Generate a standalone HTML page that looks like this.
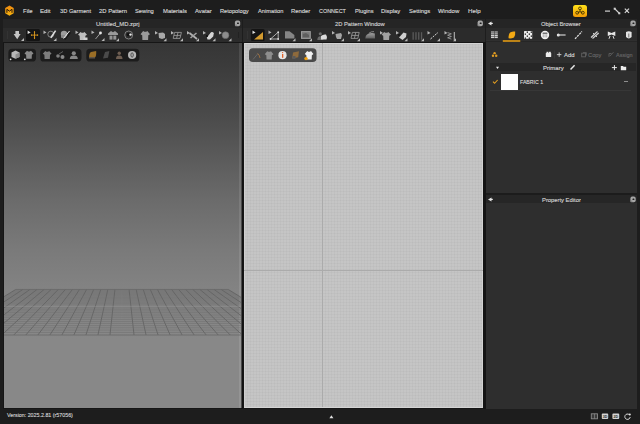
<!DOCTYPE html>
<html><head><meta charset="utf-8"><style>
html,body{margin:0;padding:0;width:640px;height:424px;overflow:hidden;background:#1c1c1c}
.b{position:absolute}
.t{position:absolute;white-space:nowrap;font-family:"Liberation Sans", sans-serif;transform-origin:0 0}
svg{position:absolute;overflow:visible}
</style></head><body>
<div class="b" style="left:0px;top:0px;width:640px;height:424px;background:#1d1d1d;"></div><div class="b" style="left:3px;top:19px;width:239px;height:9px;background:#252525;"></div><div class="b" style="left:3px;top:28px;width:239px;height:14px;background:#2b2b2b;"></div><div class="b" style="left:3px;top:42px;width:239px;height:367px;background:#161616;"></div><div class="b" style="left:241px;top:42px;width:3px;height:367px;background:#121212;"></div><div class="b" style="left:4px;top:43px;width:237px;height:365px;background:linear-gradient(#363636 0px, #3b3b3b 21px, #4a4a4a 71px, #6b6b6b 157px, #7a7a7a 207px, #838383 247px, #888888 297px, #888888 365px);"></div><div class="b" style="left:243px;top:19px;width:242px;height:9px;background:#252525;"></div><div class="b" style="left:243px;top:28px;width:242px;height:14px;background:#2b2b2b;"></div><div class="b" style="left:243px;top:42px;width:242px;height:367px;background:#161616;"></div><div class="b" style="left:483px;top:42px;width:3px;height:367px;background:#141414;"></div><div class="b" style="left:244px;top:43px;width:239px;height:365px;background:#c5c5c5;background-image:repeating-linear-gradient(90deg,rgba(0,0,0,0.022) 0 1px,transparent 1px 3px),repeating-linear-gradient(0deg,rgba(0,0,0,0.022) 0 1px,transparent 1px 3px)"></div><div class="b" style="left:244px;top:43px;width:239px;height:1px;background:#d4d4d4;"></div><div class="b" style="left:244px;top:43px;width:1px;height:365px;background:#cfcfcf;"></div><div class="b" style="left:322px;top:43px;width:1px;height:365px;background:#ababab;"></div><div class="b" style="left:482px;top:43px;width:1px;height:365px;background:#d2d2d2;"></div><div class="b" style="left:244px;top:407px;width:239px;height:1px;background:#d4d4d4;"></div><div class="b" style="left:239px;top:43px;width:2px;height:365px;background:rgba(255,255,255,0.10);"></div><div class="b" style="left:241px;top:43px;width:1px;height:365px;background:#4a4a4a;"></div><div class="b" style="left:244px;top:270px;width:239px;height:1px;background:#ababab;"></div><div class="b" style="left:486px;top:19px;width:151px;height:9px;background:#252525;"></div><div class="b" style="left:486px;top:28px;width:151px;height:14px;background:#2b2b2b;"></div><div class="b" style="left:486px;top:42px;width:151px;height:151px;background:#2e2e2e;"></div><div class="b" style="left:486px;top:40px;width:151px;height:1px;background:#2f2f2f;"></div><div class="b" style="left:486px;top:41px;width:151px;height:1px;background:#262626;"></div><div class="b" style="left:486px;top:193px;width:151px;height:2px;background:#1c1c1c;"></div><div class="b" style="left:486px;top:195px;width:151px;height:8px;background:#262626;"></div><div class="b" style="left:486px;top:203px;width:151px;height:206px;background:#2e2e2e;"></div><div class="b" style="left:490px;top:63px;width:146px;height:8px;background:#262626;"></div><div class="b" style="left:490px;top:90px;width:141px;height:1px;background:#373737;"></div><div class="b" style="left:501px;top:74px;width:17px;height:16px;background:#ffffff;"></div><svg width="640" height="424" style="left:0;top:0"><clipPath id="vp"><rect x="4" y="43" width="237" height="365"/></clipPath><g clip-path="url(#vp)"><line x1="15.70" y1="289.5" x2="-58.37" y2="335.0" stroke="#5e5e5e" stroke-width="0.75"/><line x1="22.79" y1="289.5" x2="-46.34" y2="335.0" stroke="#5e5e5e" stroke-width="0.75"/><line x1="29.87" y1="289.5" x2="-34.32" y2="335.0" stroke="#5e5e5e" stroke-width="0.75"/><line x1="36.96" y1="289.5" x2="-22.29" y2="335.0" stroke="#5e5e5e" stroke-width="0.75"/><line x1="44.05" y1="289.5" x2="-10.27" y2="335.0" stroke="#5e5e5e" stroke-width="0.75"/><line x1="51.13" y1="289.5" x2="1.75" y2="335.0" stroke="#5e5e5e" stroke-width="0.75"/><line x1="58.22" y1="289.5" x2="13.78" y2="335.0" stroke="#5e5e5e" stroke-width="0.75"/><line x1="65.31" y1="289.5" x2="25.80" y2="335.0" stroke="#5e5e5e" stroke-width="0.75"/><line x1="72.39" y1="289.5" x2="37.83" y2="335.0" stroke="#5e5e5e" stroke-width="0.75"/><line x1="79.48" y1="289.5" x2="49.85" y2="335.0" stroke="#5e5e5e" stroke-width="0.75"/><line x1="86.57" y1="289.5" x2="61.88" y2="335.0" stroke="#5e5e5e" stroke-width="0.75"/><line x1="93.65" y1="289.5" x2="73.90" y2="335.0" stroke="#5e5e5e" stroke-width="0.75"/><line x1="100.74" y1="289.5" x2="85.93" y2="335.0" stroke="#5e5e5e" stroke-width="0.75"/><line x1="107.83" y1="289.5" x2="97.95" y2="335.0" stroke="#5e5e5e" stroke-width="0.75"/><line x1="114.91" y1="289.5" x2="109.98" y2="335.0" stroke="#5e5e5e" stroke-width="0.75"/><line x1="122.00" y1="289.5" x2="122.00" y2="335.0" stroke="#8a8a8a" stroke-width="0.75"/><line x1="129.09" y1="289.5" x2="134.02" y2="335.0" stroke="#5e5e5e" stroke-width="0.75"/><line x1="136.17" y1="289.5" x2="146.05" y2="335.0" stroke="#5e5e5e" stroke-width="0.75"/><line x1="143.26" y1="289.5" x2="158.07" y2="335.0" stroke="#5e5e5e" stroke-width="0.75"/><line x1="150.35" y1="289.5" x2="170.10" y2="335.0" stroke="#5e5e5e" stroke-width="0.75"/><line x1="157.43" y1="289.5" x2="182.12" y2="335.0" stroke="#5e5e5e" stroke-width="0.75"/><line x1="164.52" y1="289.5" x2="194.15" y2="335.0" stroke="#5e5e5e" stroke-width="0.75"/><line x1="171.61" y1="289.5" x2="206.17" y2="335.0" stroke="#5e5e5e" stroke-width="0.75"/><line x1="178.69" y1="289.5" x2="218.20" y2="335.0" stroke="#5e5e5e" stroke-width="0.75"/><line x1="185.78" y1="289.5" x2="230.22" y2="335.0" stroke="#5e5e5e" stroke-width="0.75"/><line x1="192.87" y1="289.5" x2="242.25" y2="335.0" stroke="#5e5e5e" stroke-width="0.75"/><line x1="199.95" y1="289.5" x2="254.27" y2="335.0" stroke="#5e5e5e" stroke-width="0.75"/><line x1="207.04" y1="289.5" x2="266.29" y2="335.0" stroke="#5e5e5e" stroke-width="0.75"/><line x1="214.13" y1="289.5" x2="278.32" y2="335.0" stroke="#5e5e5e" stroke-width="0.75"/><line x1="221.21" y1="289.5" x2="290.34" y2="335.0" stroke="#5e5e5e" stroke-width="0.75"/><line x1="228.30" y1="289.5" x2="302.37" y2="335.0" stroke="#5e5e5e" stroke-width="0.75"/><line x1="-58.37" y1="335.00" x2="302.37" y2="335.00" stroke="#686868" stroke-width="0.8"/><line x1="-54.27" y1="332.48" x2="298.27" y2="332.48" stroke="#686868" stroke-width="0.4"/><line x1="-50.35" y1="330.08" x2="294.35" y2="330.08" stroke="#686868" stroke-width="0.4"/><line x1="-46.61" y1="327.77" x2="290.61" y2="327.77" stroke="#686868" stroke-width="0.4"/><line x1="-43.02" y1="325.57" x2="287.02" y2="325.57" stroke="#686868" stroke-width="0.4"/><line x1="-39.58" y1="323.46" x2="283.58" y2="323.46" stroke="#686868" stroke-width="0.4"/><line x1="-36.28" y1="321.43" x2="280.28" y2="321.43" stroke="#686868" stroke-width="0.4"/><line x1="-33.12" y1="319.49" x2="277.12" y2="319.49" stroke="#686868" stroke-width="0.4"/><line x1="-30.08" y1="317.62" x2="274.08" y2="317.62" stroke="#686868" stroke-width="0.4"/><line x1="-27.15" y1="315.82" x2="271.15" y2="315.82" stroke="#686868" stroke-width="0.4"/><line x1="-24.34" y1="314.09" x2="268.34" y2="314.09" stroke="#686868" stroke-width="0.4"/><line x1="-21.63" y1="312.43" x2="265.63" y2="312.43" stroke="#686868" stroke-width="0.4"/><line x1="-19.02" y1="310.83" x2="263.02" y2="310.83" stroke="#686868" stroke-width="0.4"/><line x1="-16.50" y1="309.28" x2="260.50" y2="309.28" stroke="#686868" stroke-width="0.4"/><line x1="-14.07" y1="307.79" x2="258.07" y2="307.79" stroke="#686868" stroke-width="0.4"/><line x1="-11.72" y1="306.34" x2="255.72" y2="306.34" stroke="#8c8c8c" stroke-width="0.6"/><line x1="-9.45" y1="304.95" x2="253.45" y2="304.95" stroke="#686868" stroke-width="0.4"/><line x1="-7.26" y1="303.61" x2="251.26" y2="303.61" stroke="#686868" stroke-width="0.4"/><line x1="-5.14" y1="302.30" x2="249.14" y2="302.30" stroke="#686868" stroke-width="0.4"/><line x1="-3.09" y1="301.05" x2="247.09" y2="301.05" stroke="#686868" stroke-width="0.4"/><line x1="-1.11" y1="299.83" x2="245.11" y2="299.83" stroke="#686868" stroke-width="0.4"/><line x1="0.82" y1="298.64" x2="243.18" y2="298.64" stroke="#686868" stroke-width="0.4"/><line x1="2.68" y1="297.50" x2="241.32" y2="297.50" stroke="#686868" stroke-width="0.4"/><line x1="4.49" y1="296.39" x2="239.51" y2="296.39" stroke="#686868" stroke-width="0.4"/><line x1="6.24" y1="295.31" x2="237.76" y2="295.31" stroke="#686868" stroke-width="0.4"/><line x1="7.94" y1="294.26" x2="236.06" y2="294.26" stroke="#686868" stroke-width="0.4"/><line x1="9.60" y1="293.25" x2="234.40" y2="293.25" stroke="#686868" stroke-width="0.4"/><line x1="11.20" y1="292.26" x2="232.80" y2="292.26" stroke="#686868" stroke-width="0.4"/><line x1="12.76" y1="291.30" x2="231.24" y2="291.30" stroke="#686868" stroke-width="0.4"/><line x1="14.28" y1="290.37" x2="229.72" y2="290.37" stroke="#686868" stroke-width="0.4"/><line x1="15.76" y1="289.47" x2="228.24" y2="289.47" stroke="#686868" stroke-width="0.8"/></g><defs><linearGradient id="lg" x1="0" y1="0" x2="0" y2="1"><stop offset="0" stop-color="#f08a10"/><stop offset="1" stop-color="#f7b40e"/></linearGradient><linearGradient id="yb" x1="0" y1="0" x2="0" y2="1"><stop offset="0" stop-color="#ffe11a"/><stop offset="1" stop-color="#f29a05"/></linearGradient></defs>
<polygon points="9.45,5.5 13.69352447854375,8.05 13.69352447854375,13.149999999999999 9.45,15.7 5.206475521456249,13.149999999999999 5.20647552145625,8.049999999999999" fill="url(#lg)" />
<path d="M6.9,12.8 L6.9,9.3 L9.45,11.1 L12.0,9.3 L12.0,12.8" fill="none" stroke="#2a1a08" stroke-width="1.0" />
<rect x="573" y="5" width="14" height="12" rx="2.5" fill="url(#yb)" />
<line x1="580" y1="9.6" x2="580" y2="11.6" stroke="#3b2a00" stroke-width="0.85" /><line x1="580" y1="11.6" x2="577.6" y2="12.8" stroke="#3b2a00" stroke-width="0.85" /><line x1="580" y1="11.6" x2="582.4" y2="12.8" stroke="#3b2a00" stroke-width="0.85" />
<circle cx="580" cy="8.4" r="1.4" fill="none" stroke="#3b2a00" stroke-width="0.85"/><circle cx="577.2" cy="12.7" r="1.45" fill="none" stroke="#3b2a00" stroke-width="0.85"/><circle cx="582.8" cy="12.7" r="1.45" fill="none" stroke="#3b2a00" stroke-width="0.85"/>
<rect x="605" y="10.5" width="5" height="1.2" rx="0" fill="#d0d0d0" />
<line x1="614.5" y1="8.5" x2="619.5" y2="13.5" stroke="#d0d0d0" stroke-width="1.1" />
<rect x="613.7" y="7.7" width="2" height="2" rx="0" fill="#d0d0d0" /><rect x="618.3" y="12.3" width="2" height="2" rx="0" fill="#d0d0d0" />
<line x1="624.8" y1="8.6" x2="629" y2="12.8" stroke="#d8d8d8" stroke-width="1.2" /><line x1="629" y1="8.6" x2="624.8" y2="12.8" stroke="#d8d8d8" stroke-width="1.2" />
<rect x="234.9" y="20.599999999999998" width="5.3" height="5.6" rx="1.8" fill="#a6a6a6" /><rect x="237.0" y="22.4" width="1.9" height="1.7" rx="0.6" fill="#202020" /><rect x="234.9" y="24.599999999999998" width="2" height="1.6" rx="0.6" fill="#8a8a8a" />
<rect x="477.59999999999997" y="20.599999999999998" width="5.3" height="5.6" rx="1.8" fill="#a6a6a6" /><rect x="479.7" y="22.4" width="1.9" height="1.7" rx="0.6" fill="#202020" /><rect x="477.59999999999997" y="24.599999999999998" width="2" height="1.6" rx="0.6" fill="#8a8a8a" />
<rect x="630.4" y="20.599999999999998" width="5.3" height="5.6" rx="1.8" fill="#a6a6a6" /><rect x="632.5" y="22.4" width="1.9" height="1.7" rx="0.6" fill="#202020" /><rect x="630.4" y="24.599999999999998" width="2" height="1.6" rx="0.6" fill="#8a8a8a" />
<rect x="630.4" y="196.6" width="5.3" height="5.6" rx="1.8" fill="#a6a6a6" /><rect x="632.5" y="198.4" width="1.9" height="1.7" rx="0.6" fill="#202020" /><rect x="630.4" y="200.6" width="2" height="1.6" rx="0.6" fill="#8a8a8a" />
<polygon points="488,23.4 491.5,21.4 491.5,25.4" fill="#e6e6e6" />
<rect x="491" y="22.799999999999997" width="1.8" height="1.2" rx="0" fill="#e6e6e6" />
<polygon points="488,199.4 491.5,197.4 491.5,201.4" fill="#e6e6e6" />
<rect x="491" y="198.8" width="1.8" height="1.2" rx="0" fill="#e6e6e6" />
<rect x="7" y="31" width="1" height="8" rx="0" fill="#333333" />
<polygon points="15.4,31 19,31 19,34 20.6,34 17.2,39.3 13.6,34 15.4,34" fill="#c4c4c4" />
<polygon points="24,38 24,41 21,41" fill="#b8b8b8" />
<rect x="26" y="29" width="14" height="12" rx="1.5" fill="#141414" />
<polygon points="27.6,30.6 30.6,32.5 27.6,34.0" fill="#e0e0e0" />
<line x1="31.2" y1="35.1" x2="37.9" y2="35.1" stroke="#e9a21f" stroke-width="0.85" /><line x1="34.5" y1="31.6" x2="34.5" y2="38.5" stroke="#e9a21f" stroke-width="0.85" />
<polygon points="34.5,30.9 33.6,32.3 35.4,32.3" fill="#e9a21f" /><polygon points="34.5,39.2 33.6,37.8 35.4,37.8" fill="#e9a21f" /><polygon points="30.6,35.1 32,34.2 32,36" fill="#e9a21f" /><polygon points="38.5,35.1 37.1,34.2 37.1,36" fill="#e9a21f" />
<polygon points="43.5,30.5 46.5,32.4 43.5,33.9" fill="#b4b4b4" />
<circle cx="50.8" cy="34.2" r="3" fill="none" stroke="#9a9a9a" stroke-width="0.8"/>
<line x1="55.6" y1="30.6" x2="50.8" y2="37.8" stroke="#dedede" stroke-width="1.6" />
<polygon points="56.5,38 56.5,41 53.5,41" fill="#b8b8b8" />
<circle cx="64" cy="34" r="3.2" fill="#9c9c9c" /><rect x="61" y="35" width="5" height="3" rx="1" fill="#8a8a8a" />
<line x1="69.5" y1="31" x2="63.5" y2="38.5" stroke="#e8e8e8" stroke-width="1.0" /><line x1="70.5" y1="32.5" x2="65" y2="39.5" stroke="#151515" stroke-width="1.2" />
<polygon points="75.5,30.5 78.5,32.4 75.5,33.9" fill="#b4b4b4" />
<polygon points="80.52,32 81.6,32.64 83.4,32.64 84.48,32 87,34.8 85.38,35.84 85.2,40 79.8,40 79.62,35.84 78,34.8" fill="#bdbdbd" />
<rect x="83.5" y="37.5" width="4" height="2.5" rx="0" fill="#d0d0d0" />
<polygon points="91.5,30.5 94.5,32.4 91.5,33.9" fill="#b4b4b4" />
<line x1="95.5" y1="39" x2="100.5" y2="33" stroke="#a8a8a8" stroke-width="0.9" /><circle cx="100.5" cy="33" r="1.4" fill="#e8e8e8" />
<polygon points="104.5,38 104.5,41 101.5,41" fill="#b8b8b8" />
<path d="M108,33.5 L111,31 L113,32.2 L115,31 L118,33.5 L118,35 L108,35 Z" fill="#9a9a9a" stroke="none" stroke-width="1" />
<rect x="109.5" y="35.6" width="3" height="4" rx="0" fill="#959595" /><rect x="113.3" y="35.6" width="3" height="4" rx="0" fill="#959595" />
<polygon points="119,38.2 119,41.2 116,41.2" fill="#b8b8b8" />
<circle cx="128.7" cy="35" r="4" fill="none" stroke="#888" stroke-width="0.9"/>
<circle cx="128.2" cy="34.6" r="1.6" fill="#111" /><circle cx="130.5" cy="34.6" r="1.2" fill="#f0f0f0" />
<polygon points="143.16,31 144.3,31.72 146.2,31.72 147.34,31 150.0,34.15 148.29,35.32 148.1,40 142.4,40 142.21,35.32 140.5,34.15" fill="#9b9b9b" />
<polygon points="155,31 158.0,32.9 155,34.4" fill="#b4b4b4" />
<path d="M158.5,33 L163,32.5 L165,34 L165,38 L162,39 L159,38 Z" fill="#a9a9a9" stroke="none" stroke-width="1" />
<polygon points="166.5,38.2 166.5,41.2 163.5,41.2" fill="#b8b8b8" />
<polygon points="171,31 174.0,32.9 171,34.4" fill="#b4b4b4" />
<path d="M174.6,32.4 L181.4,32.4 L180,38.4 L173.2,38.4 Z M178,32.4 L176.6,38.4 M173.9,35.4 L180.7,35.4" fill="none" stroke="#a0a0a0" stroke-width="0.8" />
<polygon points="183,38.2 183,41.2 180,41.2" fill="#b8b8b8" />
<polygon points="187,31 190.0,32.9 187,34.4" fill="#b4b4b4" />
<line x1="189.5" y1="33" x2="197" y2="39" stroke="#b0b0b0" stroke-width="1.8" /><line x1="196.5" y1="33" x2="190.5" y2="38" stroke="#a0a0a0" stroke-width="1.6" />
<polygon points="199,38.2 199,41.2 196,41.2" fill="#b8b8b8" />
<polygon points="203,31 206.0,32.9 203,34.4" fill="#b4b4b4" />
<path d="M206.8,37.5 L211,32.2 Q213.5,31.8 213.8,33.5 L213.2,36.5 L210,39.6 L207.5,39.6 Z" fill="#d4d4d4" stroke="none" stroke-width="1" />
<circle cx="207" cy="36" r="1" fill="#0e0e0e" />
<polygon points="215.5,38.2 215.5,41.2 212.5,41.2" fill="#b8b8b8" />
<polygon points="219,31 222.0,32.9 219,34.4" fill="#b4b4b4" />
<circle cx="225.5" cy="35.2" r="3.4" fill="#8d8d8d" stroke="#6a6a6a" stroke-width="0.6"/>
<polygon points="231.5,38.2 231.5,41.2 228.5,41.2" fill="#b8b8b8" />
<rect x="238" y="32" width="1" height="6" rx="0" fill="#222222" />
<rect x="8.4" y="48.8" width="27.6" height="12.7" rx="3.6" fill="#1c1c1c" />
<rect x="40.2" y="48.8" width="41.3" height="12.7" rx="3.6" fill="#1c1c1c" />
<rect x="86.3" y="48.8" width="53.1" height="12.7" rx="3.6" fill="#1c1c1c" />
<polygon points="15.5,50.6 19.5,52.5 19.5,57 15.5,58.8 11.5,57 11.5,52.5" fill="#b8b8b8" /><polygon points="15.5,54.5 19.5,52.5 19.5,57 15.5,58.8" fill="#8e8e8e" />
<circle cx="10.6" cy="59.3" r="0.9" fill="#e0e0e0" />
<polygon points="27.02,50.8 28.1,51.44 29.9,51.44 30.98,50.8 33.5,53.599999999999994 31.88,54.64 31.7,58.8 26.3,58.8 26.12,54.64 24.5,53.599999999999994" fill="#888888" /><circle cx="24.8" cy="59.3" r="0.9" fill="#e0e0e0" />
<polygon points="45.263999999999996,51 46.32,51.64 48.08,51.64 49.135999999999996,51 51.599999999999994,53.8 50.01599999999999,54.84 49.839999999999996,59 44.559999999999995,59 44.384,54.84 42.8,53.8" fill="#7c7c7c" />
<circle cx="58" cy="56" r="1.8" fill="#7e7e7e" /><circle cx="62.5" cy="57" r="2" fill="#8a8a8a" /><line x1="59" y1="54" x2="63" y2="51.5" stroke="#7a7a7a" stroke-width="0.7" />
<circle cx="73.8" cy="53.26" r="2.08" fill="#888" /><path d="M69.8,59.0 Q69.8,55.556 73.8,55.556 Q77.8,55.556 77.8,59.0 Z" fill="#888" stroke="none" stroke-width="1" />
<path d="M89,58 Q89,53 91,52 L96.2,51 Q96.5,56 95,57.5 Z" fill="#9a6e26" stroke="none" stroke-width="1" /><rect x="89" y="57" width="6" height="1.5" rx="0" fill="#5e5448" />
<path d="M103,58.5 L105,52 L109.4,51 L108,57.8 Z" fill="#4a4a4a" stroke="none" stroke-width="1" />
<circle cx="119.25" cy="53.26" r="1.69" fill="#6e5e52" /><path d="M116,59.0 Q116,55.556 119.25,55.556 Q122.5,55.556 122.5,59.0 Z" fill="#6e5e52" stroke="none" stroke-width="1" />
<circle cx="132.1" cy="55" r="4.1" fill="#b4b4b4" /><ellipse cx="132.1" cy="55" rx="1.2" ry="2.2" fill="none" stroke="#3a3a3a" stroke-width="0.8"/>
<rect x="247" y="31" width="1" height="8" rx="0" fill="#333333" />
<rect x="250.9" y="29" width="13.7" height="12" rx="1.5" fill="#141414" />
<polygon points="252.5,30.5 255.5,32.4 252.5,33.9" fill="#e0e0e0" />
<polygon points="254,39.6 263,32 263,39.6" fill="#d29a2e" />
<polygon points="268.5,30.5 271.5,32.4 268.5,33.9" fill="#b4b4b4" />
<path d="M270.5,39 L278.2,32.2 L278.2,39 Z" fill="none" stroke="#cfcfcf" stroke-width="0.8" /><circle cx="270.5" cy="39" r="0.9" fill="#ddd" /><circle cx="278.2" cy="39" r="0.9" fill="#ddd" /><circle cx="278.2" cy="32.2" r="0.9" fill="#ddd" />
<path d="M285,31.2 L289.5,31.2 L294.4,35 L294.4,38.6 L285,38.6 Z" fill="#858585" stroke="none" stroke-width="1" />
<polygon points="295.5,38.3 295.5,41.3 292.5,41.3" fill="#b8b8b8" />
<rect x="301.5" y="31.6" width="8.8" height="6.8" rx="0" fill="#7a7a7a" stroke="#9a9a9a" stroke-width="1"/><path d="M302.8,37.2 L302.8,34 L306,33 L309,35 L309,37.2 Z" fill="#5e5e5e" stroke="none" stroke-width="1" />
<polygon points="312,38.3 312,41.3 309,41.3" fill="#b8b8b8" />
<circle cx="320.3" cy="33.7" r="1.56" fill="#6a6a6a" /><path d="M317.3,40 Q317.3,36.22 320.3,36.22 Q323.3,36.22 323.3,40 Z" fill="#6a6a6a" stroke="none" stroke-width="1" /><path d="M321,39.5 L321,36 Q323,34 326,34.5 L327,37 L326.5,39.5 Z" fill="#dcdcdc" stroke="none" stroke-width="1" />
<polygon points="332,31 335.0,32.9 332,34.4" fill="#b4b4b4" />
<path d="M335.5,34 L341,33 L342,35 L341,39 L337,39 L336,37 Z" fill="#a5a5a5" stroke="none" stroke-width="1" />
<polygon points="344,38.3 344,41.3 341,41.3" fill="#b8b8b8" />
<polygon points="348,31 351.0,32.9 348,34.4" fill="#b4b4b4" />
<path d="M352.4,32.4 L359.2,32.4 L357.8,38.4 L351,38.4 Z M355.8,32.4 L354.4,38.4 M351.7,35.4 L358.5,35.4" fill="none" stroke="#a0a0a0" stroke-width="0.8" />
<polygon points="360,38.3 360,41.3 357,41.3" fill="#b8b8b8" />
<linearGradient id="ir" x1="0" y1="0" x2="0" y2="1"><stop offset="0" stop-color="#a0a0a0"/><stop offset="1" stop-color="#606060"/></linearGradient>
<path d="M365.3,38.5 L365.8,36 Q367.5,33.2 372,33 L374.8,33.6 L375,38.5 Z" fill="url(#ir)" stroke="none" stroke-width="1" /><path d="M369,33.2 Q371,31.4 374,31.6" fill="none" stroke="#9a9a9a" stroke-width="0.8" />
<polygon points="380,31 383.0,32.9 380,34.4" fill="#b4b4b4" />
<polygon points="384.16,32 385.3,32.64 387.2,32.64 388.34,32 391.0,34.8 389.29,35.84 389.1,40 383.4,40 383.21,35.84 381.5,34.8" fill="#a2a2a2" />
<polygon points="396,31 399.0,32.9 396,34.4" fill="#b4b4b4" />
<path d="M399,37.5 L403.5,32.5 L406.5,33.5 L406,37 L402.5,40 Z" fill="#d0d0d0" stroke="none" stroke-width="1" /><circle cx="399" cy="35" r="0.9" fill="#111" />
<polygon points="407.5,38.3 407.5,41.3 404.5,41.3" fill="#b8b8b8" />
<rect x="412.5" y="32.2" width="1.3" height="7.5" rx="0" fill="#5a5a5a" />
<rect x="415.3" y="32.2" width="1.3" height="7.5" rx="0" fill="#5a5a5a" />
<rect x="418.1" y="32.2" width="1.3" height="7.5" rx="0" fill="#5a5a5a" />
<rect x="420.9" y="32.2" width="1.3" height="7.5" rx="0" fill="#5a5a5a" />
<polygon points="424,38.3 424,41.3 421,41.3" fill="#b8b8b8" />
<polygon points="427.5,31 430.5,32.9 427.5,34.4" fill="#b4b4b4" />
<line x1="430.5" y1="39" x2="438" y2="32.5" stroke="#d8d8d8" stroke-width="1.0" stroke-dasharray="2,1"/>
<polygon points="440,38.3 440,41.3 437,41.3" fill="#b8b8b8" />
<polygon points="444.5,31 447.5,32.9 444.5,34.4" fill="#b4b4b4" />
<path d="M447.6,32.6 L451.4,33.9 L447.6,35.2 L451.4,36.5 L447.6,37.8 L451.4,39.1" fill="none" stroke="#bdbdbd" stroke-width="0.65" />
<rect x="453.8" y="32" width="0.9" height="8" rx="0" fill="#cfcfcf" />
<polygon points="456,38.3 456,41.3 453,41.3" fill="#b8b8b8" />
<rect x="249" y="48.3" width="67.5" height="13.7" rx="3.8" fill="#494949" />
<line x1="253" y1="59.5" x2="258" y2="53.5" stroke="#6a6a6a" stroke-width="0.9" /><path d="M257.5,53.5 Q259.5,54.5 260,58" fill="none" stroke="#b0763a" stroke-width="0.8" />
<polygon points="267.208,51.2 268.24,51.872 269.96000000000004,51.872 270.992,51.2 273.40000000000003,54.14 271.85200000000003,55.232 271.68,59.6 266.52000000000004,59.6 266.348,55.232 264.8,54.14" fill="#8e8e8e" />
<circle cx="282.5" cy="55.2" r="4.1" fill="#e6e6e6" /><rect x="282" y="54" width="1.3" height="3.8" rx="0" fill="#e2632a" /><circle cx="282.6" cy="52.6" r="0.7" fill="#e2632a" />
<path d="M292.2,58.5 L293,52.5 L299,51.2 L298.2,57.2 Z" fill="#8e6a3c" stroke="none" stroke-width="1" /><rect x="292.5" y="56" width="3" height="3" rx="0" fill="#5a5a5a" />
<polygon points="307.208,51 308.24,51.688 309.96000000000004,51.688 310.992,51 313.40000000000003,54.01 311.85200000000003,55.128 311.68,59.6 306.52000000000004,59.6 306.348,55.128 304.8,54.01" fill="#f0f0f0" /><circle cx="306" cy="58.6" r="1.7" fill="#f0a010" />
<rect x="491.0" y="31.3" width="3.2" height="1.4" rx="0" fill="#a8a8a8" />
<rect x="494.6" y="31.3" width="3.2" height="1.4" rx="0" fill="#a8a8a8" />
<rect x="491.0" y="33.1" width="3.2" height="1.4" rx="0" fill="#a8a8a8" />
<rect x="494.6" y="33.1" width="3.2" height="1.4" rx="0" fill="#a8a8a8" />
<rect x="491.0" y="34.9" width="3.2" height="1.4" rx="0" fill="#d0d0d0" />
<rect x="494.6" y="34.9" width="3.2" height="1.4" rx="0" fill="#d0d0d0" />
<rect x="491.0" y="36.7" width="3.2" height="1.4" rx="0" fill="#d0d0d0" />
<rect x="494.6" y="36.7" width="3.2" height="1.4" rx="0" fill="#d0d0d0" />
<path d="M508.6,38.3 Q508.2,34 510.5,32.2 Q513,31 515.2,31.6 Q515.6,35.5 514,37.6 Q511,38.8 508.6,38.3 Z" fill="#f2a914" stroke="none" stroke-width="1" />
<rect x="502.8" y="40.2" width="17.5" height="1.6" rx="0" fill="#e09a14" />
<rect x="524" y="31" width="8.2" height="7.8" rx="0.6" fill="#ececec" />
<rect x="524.6999999999999" y="33.49999999999999" width="1.3" height="1.3" rx="0" fill="#1a1a1a" />
<rect x="524.6999999999999" y="37.49999999999999" width="1.3" height="1.3" rx="0" fill="#1a1a1a" />
<rect x="526.6999999999999" y="31.5" width="1.3" height="1.3" rx="0" fill="#1a1a1a" />
<rect x="526.6999999999999" y="35.49999999999999" width="1.3" height="1.3" rx="0" fill="#1a1a1a" />
<rect x="528.6999999999999" y="33.49999999999999" width="1.3" height="1.3" rx="0" fill="#1a1a1a" />
<rect x="528.6999999999999" y="37.49999999999999" width="1.3" height="1.3" rx="0" fill="#1a1a1a" />
<rect x="530.6999999999999" y="31.5" width="1.3" height="1.3" rx="0" fill="#1a1a1a" />
<rect x="530.6999999999999" y="35.49999999999999" width="1.3" height="1.3" rx="0" fill="#1a1a1a" />
<circle cx="545" cy="35" r="4.2" fill="#f2f2f2" /><rect x="542.6" y="32.6" width="4.8" height="1.2" rx="0" fill="#555" /><rect x="542.6" y="34.5" width="2" height="1.1" rx="0" fill="#999" /><rect x="545.3" y="34.5" width="2" height="1.1" rx="0" fill="#999" /><rect x="542.6" y="36.2" width="2" height="1.1" rx="0" fill="#aaa" /><rect x="545.3" y="36.2" width="2" height="1.1" rx="0" fill="#aaa" />
<circle cx="558.3" cy="35" r="1.5" fill="#e8e8e8" /><rect x="558.3" y="34.4" width="7.3" height="1.2" rx="0" fill="#cfcfcf" />
<line x1="575" y1="38.8" x2="582" y2="31.5" stroke="#e0e0e0" stroke-width="1.2" stroke-dasharray="2.2,0.9"/>
<path d="M591,37.5 L597.5,31.5 M592.5,38.5 L598.7,33" fill="none" stroke="#d0d0d0" stroke-width="1.2" /><line x1="593" y1="33" x2="597" y2="37" stroke="#d0d0d0" stroke-width="1" />
<path d="M607.8,31.5 L611.5,33 L615.3,31.5 L615.3,36 L611.5,34.6 L607.8,36 Z" fill="#e6e6e6" stroke="none" stroke-width="1" /><path d="M610,36 L609,38.8 M613,36 L614,38.8" fill="none" stroke="#ddd" stroke-width="1" />
<path d="M626,32 Q628.8,30.5 631.6,32 L631.6,37 Q628.8,39.8 626,37 Z" fill="#e3e3e3" stroke="none" stroke-width="1" /><rect x="628.5" y="33.5" width="0.7" height="4" rx="0" fill="#444" />
<circle cx="494.6" cy="53.3" r="1.25" fill="#dd9a22" /><circle cx="493" cy="55.8" r="1.25" fill="#dd9a22" /><circle cx="496.2" cy="55.8" r="1.25" fill="#dd9a22" /><circle cx="494.6" cy="54.9" r="0.6" fill="#2e2e2e" />
<rect x="545.8" y="53" width="5.4" height="4" rx="0.5" fill="#ececec" /><rect x="546.5" y="51.8" width="2" height="1.5" rx="0" fill="#ececec" /><rect x="549" y="51.8" width="1.8" height="1.5" rx="0" fill="#ececec" />
<rect x="554" y="50.5" width="0.6" height="8" rx="0" fill="#3c3c3c" />
<rect x="556.9" y="54.2" width="4.5" height="0.9" rx="0" fill="#d4d4d4" /><rect x="558.7" y="52.4" width="0.9" height="4.5" rx="0" fill="#d4d4d4" />
<rect x="581.7" y="53.2" width="3.8" height="3.6" rx="0" fill="none" stroke="#626262" stroke-width="0.9" rx="0.8"/><path d="M583,52.6 L586.4,52.6 L586.4,55.6" fill="none" stroke="#626262" stroke-width="0.8" />
<path d="M609,56.8 L609,53.5 L611.5,53.5 M610,56 L613.5,52.2" fill="none" stroke="#5e5e5e" stroke-width="0.9" />
<polygon points="496,66.8 499,66.8 497.5,69" fill="#e8e8e8" />
<line x1="570.5" y1="69.6" x2="574.6" y2="65.3" stroke="#e6e6e6" stroke-width="1.5" />
<rect x="611.9" y="67.1" width="5" height="1" rx="0" fill="#e8e8e8" /><rect x="613.9" y="65.1" width="1" height="5" rx="0" fill="#e8e8e8" />
<path d="M620.8,66 L623,66 L623.6,66.8 L626.2,66.8 L626.2,70.2 L620.8,70.2 Z" fill="#ececec" stroke="none" stroke-width="1" />
<path d="M493,81.6 L494.6,83.3 L497.6,80" fill="none" stroke="#e6a020" stroke-width="1.1" />
<rect x="624" y="81" width="4" height="0.9" rx="0" fill="#9a9a9a" />
<polygon points="331.4,415.2 333.4,418.2 329.4,418.2" fill="#e0e0e0" />
<rect x="591.3" y="413.8" width="6.2" height="5" rx="0" fill="#3a3a3a" stroke="#8a8a8a" stroke-width="0.9" rx="0.8"/><rect x="594.1" y="413.8" width="0.7" height="5" rx="0" fill="#8a8a8a" />
<rect x="601.8" y="413.6" width="6.4" height="5.3" rx="0.9" fill="#d4d4d4" /><text x="605" y="417.6" font-family="Liberation Sans" font-weight="bold" font-size="3.6" text-anchor="middle" fill="#2a2a2a">3D</text>
<rect x="612.4" y="413.6" width="6.8" height="5.3" rx="0.9" fill="#d4d4d4" /><text x="615.8" y="417.6" font-family="Liberation Sans" font-weight="bold" font-size="3.6" text-anchor="middle" fill="#2a2a2a">2D</text>
<path d="M629.2,414.6 A2.7,2.7 0 1,0 630.2,417" fill="none" stroke="#d8d8d8" stroke-width="1" /><circle cx="629.8" cy="414.6" r="1" fill="#e8e8e8" /></svg>
<div class="t" style="left:22.92px;top:8.00px;font-size:6.15px;line-height:6.15px;color:#d6d6d6;-webkit-text-stroke:0.15px #d6d6d6;font-weight:400;transform:scaleX(0.969)">File</div>
<div class="t" style="left:40.41px;top:8.00px;font-size:6.15px;line-height:6.15px;color:#d6d6d6;-webkit-text-stroke:0.15px #d6d6d6;font-weight:400;transform:scaleX(0.999)">Edit</div>
<div class="t" style="left:59.58px;top:8.00px;font-size:6.15px;line-height:6.15px;color:#d6d6d6;-webkit-text-stroke:0.15px #d6d6d6;font-weight:400;transform:scaleX(0.929)">3D Garment</div>
<div class="t" style="left:99.21px;top:8.00px;font-size:6.15px;line-height:6.15px;color:#d6d6d6;-webkit-text-stroke:0.15px #d6d6d6;font-weight:400;transform:scaleX(0.957)">2D Pattern</div>
<div class="t" style="left:135.27px;top:8.00px;font-size:6.15px;line-height:6.15px;color:#d6d6d6;-webkit-text-stroke:0.15px #d6d6d6;font-weight:400;transform:scaleX(0.933)">Sewing</div>
<div class="t" style="left:162.53px;top:8.00px;font-size:6.15px;line-height:6.15px;color:#d6d6d6;-webkit-text-stroke:0.15px #d6d6d6;font-weight:400;transform:scaleX(0.959)">Materials</div>
<div class="t" style="left:195.00px;top:8.00px;font-size:6.15px;line-height:6.15px;color:#d6d6d6;-webkit-text-stroke:0.15px #d6d6d6;font-weight:400;transform:scaleX(0.953)">Avatar</div>
<div class="t" style="left:220.05px;top:8.00px;font-size:6.15px;line-height:6.15px;color:#d6d6d6;-webkit-text-stroke:0.15px #d6d6d6;font-weight:400;transform:scaleX(0.923)">Retopology</div>
<div class="t" style="left:258.00px;top:8.00px;font-size:6.15px;line-height:6.15px;color:#d6d6d6;-webkit-text-stroke:0.15px #d6d6d6;font-weight:400;transform:scaleX(0.927)">Animation</div>
<div class="t" style="left:291.28px;top:8.00px;font-size:6.15px;line-height:6.15px;color:#d6d6d6;-webkit-text-stroke:0.15px #d6d6d6;font-weight:400;transform:scaleX(0.957)">Render</div>
<div class="t" style="left:318.98px;top:8.00px;font-size:6.15px;line-height:6.15px;color:#d6d6d6;-webkit-text-stroke:0.15px #d6d6d6;font-weight:400;transform:scaleX(0.885)">CONNECT</div>
<div class="t" style="left:354.55px;top:8.00px;font-size:6.15px;line-height:6.15px;color:#d6d6d6;-webkit-text-stroke:0.15px #d6d6d6;font-weight:400;transform:scaleX(0.924)">Plugins</div>
<div class="t" style="left:381.28px;top:8.00px;font-size:6.15px;line-height:6.15px;color:#d6d6d6;-webkit-text-stroke:0.15px #d6d6d6;font-weight:400;transform:scaleX(0.954)">Display</div>
<div class="t" style="left:409.02px;top:8.00px;font-size:6.15px;line-height:6.15px;color:#d6d6d6;-webkit-text-stroke:0.15px #d6d6d6;font-weight:400;transform:scaleX(0.953)">Settings</div>
<div class="t" style="left:438.25px;top:8.00px;font-size:6.15px;line-height:6.15px;color:#d6d6d6;-webkit-text-stroke:0.15px #d6d6d6;font-weight:400;transform:scaleX(0.970)">Window</div>
<div class="t" style="left:467.51px;top:8.00px;font-size:6.15px;line-height:6.15px;color:#d6d6d6;-webkit-text-stroke:0.15px #d6d6d6;font-weight:400;transform:scaleX(1.006)">Help</div>
<div class="t" style="left:96.49px;top:20.80px;font-size:6.15px;line-height:6.15px;color:#d0d0d0;-webkit-text-stroke:0.15px #d0d0d0;font-weight:400;transform:scaleX(0.961)">Untitled_MD.zprj</div>
<div class="t" style="left:334.96px;top:20.80px;font-size:6.15px;line-height:6.15px;color:#d0d0d0;-webkit-text-stroke:0.15px #d0d0d0;font-weight:400;transform:scaleX(0.940)">2D Pattern Window</div>
<div class="t" style="left:541.27px;top:20.80px;font-size:6.15px;line-height:6.15px;color:#d0d0d0;-webkit-text-stroke:0.15px #d0d0d0;font-weight:400;transform:scaleX(0.948)">Object Browser</div>
<div class="t" style="left:541.53px;top:197.20px;font-size:6.15px;line-height:6.15px;color:#d0d0d0;-webkit-text-stroke:0.15px #d0d0d0;font-weight:400;transform:scaleX(0.948)">Property Editor</div>
<div class="t" style="left:563.90px;top:51.60px;font-size:6.15px;line-height:6.15px;color:#d6d6d6;-webkit-text-stroke:0.15px #d6d6d6;font-weight:400;transform:scaleX(0.973)">Add</div>
<div class="t" style="left:588.46px;top:51.60px;font-size:6.15px;line-height:6.15px;color:#666666;-webkit-text-stroke:0.15px #666666;font-weight:400;transform:scaleX(0.937)">Copy</div>
<div class="t" style="left:616.25px;top:51.60px;font-size:6.15px;line-height:6.15px;color:#666666;-webkit-text-stroke:0.15px #666666;font-weight:400;transform:scaleX(0.898)">Assign</div>
<div class="t" style="left:543.27px;top:64.70px;font-size:6.15px;line-height:6.15px;color:#d6d6d6;-webkit-text-stroke:0.15px #d6d6d6;font-weight:400;transform:scaleX(0.975)">Primary</div>
<div class="t" style="left:520.48px;top:78.80px;font-size:6.15px;line-height:6.15px;color:#d6d6d6;-webkit-text-stroke:0.15px #d6d6d6;font-weight:400;transform:scaleX(0.848)">FABRIC 1</div>
<div class="t" style="left:6.90px;top:412.30px;font-size:6.15px;line-height:6.15px;color:#d0d0d0;-webkit-text-stroke:0.15px #d0d0d0;font-weight:400;transform:scaleX(0.865)">Version: 2025.2.81 (r57056)</div>
</body></html>
